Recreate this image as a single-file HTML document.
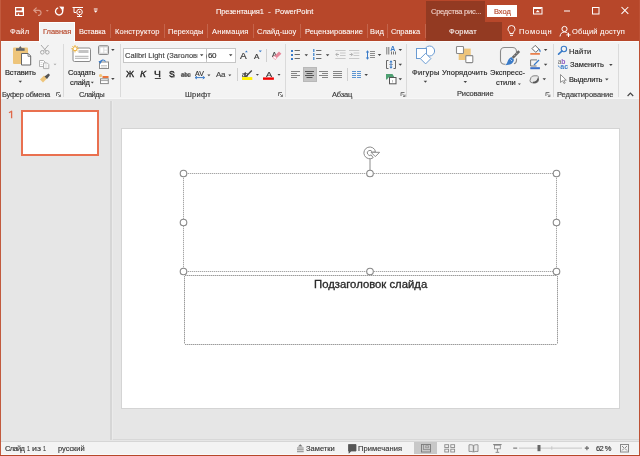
<!DOCTYPE html>
<html><head><meta charset="utf-8"><style>
*{margin:0;padding:0;box-sizing:border-box}
html,body{width:640px;height:456px;overflow:hidden;background:#E6E6E6;font-family:"Liberation Sans",sans-serif}
.a{position:absolute}
.t{position:absolute;white-space:nowrap;transform-origin:0 0}
svg{position:absolute;overflow:visible}
.t{-webkit-text-stroke:0.16px currentColor;will-change:transform}
</style></head><body>

<div class="a" style="left:0;top:0;width:640px;height:41px;background:#B7472A"></div>
<div class="a" style="left:426px;top:1px;width:59px;height:21px;background:#933A22"></div>
<div class="a" style="left:426px;top:22px;width:76px;height:19px;background:#933A22"></div>
<div class="a" style="left:39px;top:22px;width:36px;height:20px;background:#F3F3F3;border-left:1px solid #fff;border-top:1px solid #fff;border-right:1px solid #fff"></div>
<div class="a" style="left:487px;top:5px;width:30px;height:12px;background:#fff"></div>
<div class="a" style="left:0;top:41px;width:640px;height:57px;background:#F3F3F3;border-top:1px solid #FBFBFB"></div>
<div class="a" style="left:39px;top:41px;width:36px;height:2px;background:#F3F3F3;border-left:1px solid #fff;border-right:1px solid #fff"></div>
<div class="a" style="left:0;top:98px;width:640px;height:1px;background:#F7F7F7"></div>
<div class="a" style="left:110px;top:101px;width:2px;height:339px;background:#D6D6D6"></div>
<div class="a" style="left:112px;top:101px;width:1px;height:338px;background:#EBEBEB"></div>
<div class="a" style="left:113px;top:439px;width:526px;height:1px;background:#D8D8D8"></div>
<div class="a" style="left:121px;top:128px;width:499px;height:281px;background:#fff;border:1px solid #D4D4D4"></div>
<div class="a" style="left:21px;top:110px;width:78px;height:46px;background:#fff;border:2px solid #E9704F"></div>
<div class="a" style="left:0;top:441px;width:640px;height:1px;background:#D6D6D6"></div>
<div class="a" style="left:0;top:442px;width:640px;height:14px;background:#F3F3F3"></div>
<div class="a" style="left:414px;top:442px;width:23px;height:13px;background:#C8C8C8"></div>
<div class="a" style="left:303px;top:67px;width:14px;height:15px;background:#C5C5C5;border:1px solid #B8B8B8"></div>
<div class="a" style="left:123px;top:48px;width:84px;height:15px;background:#fff;border:1px solid #C6C6C6"></div>
<div class="a" style="left:206px;top:48px;width:30px;height:15px;background:#fff;border:1px solid #C6C6C6"></div>
<div class="a" style="left:0;top:454px;width:640px;height:1px;background:#FAFAFA"></div>
<div class="a" style="left:0;top:0;width:1px;height:456px;background:#C25A3E"></div>
<div class="a" style="left:639px;top:0;width:1px;height:456px;background:#BD5034"></div>
<div class="a" style="left:0;top:455px;width:640px;height:1px;background:#B7472A"></div>

<div class="t" style="left:215.60px;top:7.90px;font-size:7.5px;line-height:7.5px;color:#fff;letter-spacing:-0.141px;-webkit-text-stroke:0.08px #fff;">Презентация1</div><div class="t" style="left:267.71px;top:7.90px;font-size:7.5px;line-height:7.5px;color:#fff;transform:scaleX(1.1500);-webkit-text-stroke:0.08px #fff;">-</div><div class="t" style="left:274.50px;top:7.90px;font-size:7.5px;line-height:7.5px;color:#fff;letter-spacing:0.000px;-webkit-text-stroke:0.08px #fff;">PowerPoint</div><div class="t" style="left:431.45px;top:8.40px;font-size:7.5px;line-height:7.5px;color:#F2D6CF;letter-spacing:-0.246px;-webkit-text-stroke:0.08px #F2D6CF;">Средства рис...</div><div class="t" style="left:493.50px;top:8.30px;font-size:7.5px;line-height:7.5px;color:#B7472A;letter-spacing:-0.067px;">Вход</div><div class="t" style="left:9.75px;top:28.00px;font-size:7.5px;line-height:7.5px;color:#fff;letter-spacing:0.217px;-webkit-text-stroke:0.05px #fff;">Файл</div><div class="t" style="left:79.20px;top:28.00px;font-size:7.5px;line-height:7.5px;color:#fff;letter-spacing:-0.200px;-webkit-text-stroke:0.05px #fff;">Вставка</div><div class="t" style="left:114.80px;top:28.00px;font-size:7.5px;line-height:7.5px;color:#fff;letter-spacing:0.170px;-webkit-text-stroke:0.05px #fff;">Конструктор</div><div class="t" style="left:168.10px;top:28.00px;font-size:7.5px;line-height:7.5px;color:#fff;letter-spacing:0.021px;-webkit-text-stroke:0.05px #fff;">Переходы</div><div class="t" style="left:211.60px;top:28.00px;font-size:7.5px;line-height:7.5px;color:#fff;letter-spacing:0.164px;-webkit-text-stroke:0.05px #fff;">Анимация</div><div class="t" style="left:256.75px;top:28.00px;font-size:7.5px;line-height:7.5px;color:#fff;letter-spacing:0.031px;-webkit-text-stroke:0.05px #fff;">Слайд-шоу</div><div class="t" style="left:305.00px;top:28.00px;font-size:7.5px;line-height:7.5px;color:#fff;letter-spacing:-0.004px;-webkit-text-stroke:0.05px #fff;">Рецензирование</div><div class="t" style="left:370.00px;top:28.00px;font-size:7.5px;line-height:7.5px;color:#fff;letter-spacing:0.125px;-webkit-text-stroke:0.05px #fff;">Вид</div><div class="t" style="left:391.35px;top:28.00px;font-size:7.5px;line-height:7.5px;color:#fff;letter-spacing:-0.058px;-webkit-text-stroke:0.05px #fff;">Справка</div><div class="t" style="left:449.45px;top:28.00px;font-size:7.5px;line-height:7.5px;color:#fff;letter-spacing:0.210px;-webkit-text-stroke:0.05px #fff;">Формат</div><div class="t" style="left:519.20px;top:28.00px;font-size:7.5px;line-height:7.5px;color:#fff;letter-spacing:0.690px;-webkit-text-stroke:0.05px #fff;">Помощн</div><div class="t" style="left:571.95px;top:28.00px;font-size:7.5px;line-height:7.5px;color:#fff;letter-spacing:0.214px;-webkit-text-stroke:0.05px #fff;">Общий доступ</div><div class="t" style="left:42.50px;top:28.00px;font-size:7.5px;line-height:7.5px;color:#B7472A;letter-spacing:-0.058px;">Главная</div><div class="t" style="left:5.00px;top:68.90px;font-size:7.5px;line-height:7.5px;color:#262626;letter-spacing:-0.143px;">Вставить</div><div class="t" style="left:2.40px;top:90.60px;font-size:7.5px;line-height:7.5px;color:#3A3A3A;letter-spacing:-0.245px;">Буфер обмена</div><div class="t" style="left:67.65px;top:68.90px;font-size:7.5px;line-height:7.5px;color:#262626;letter-spacing:-0.167px;">Создать</div><div class="t" style="left:69.65px;top:78.70px;font-size:7.5px;line-height:7.5px;color:#262626;letter-spacing:-0.250px;">слайд</div><div class="t" style="left:78.75px;top:90.60px;font-size:7.5px;line-height:7.5px;color:#3A3A3A;letter-spacing:-0.450px;">Слайды</div><div class="t" style="left:185.20px;top:90.60px;font-size:7.5px;line-height:7.5px;color:#3A3A3A;letter-spacing:0.237px;">Шрифт</div><div class="t" style="left:331.70px;top:90.60px;font-size:7.5px;line-height:7.5px;color:#3A3A3A;letter-spacing:-0.175px;">Абзац</div><div class="t" style="left:411.75px;top:68.80px;font-size:7.5px;line-height:7.5px;color:#262626;letter-spacing:0.290px;">Фигуры</div><div class="t" style="left:441.85px;top:68.80px;font-size:7.5px;line-height:7.5px;color:#262626;letter-spacing:0.075px;">Упорядочить</div><div class="t" style="left:490.10px;top:68.80px;font-size:7.5px;line-height:7.5px;color:#262626;letter-spacing:0.019px;">Экспресс-</div><div class="t" style="left:496.05px;top:78.90px;font-size:7.5px;line-height:7.5px;color:#262626;letter-spacing:-0.062px;">стили</div><div class="t" style="left:457.10px;top:90.40px;font-size:7.5px;line-height:7.5px;color:#3A3A3A;letter-spacing:-0.150px;">Рисование</div><div class="t" style="left:569.40px;top:47.50px;font-size:7.5px;line-height:7.5px;color:#262626;letter-spacing:0.200px;">Найти</div><div class="t" style="left:569.65px;top:61.40px;font-size:7.5px;line-height:7.5px;color:#262626;letter-spacing:0.021px;">Заменить</div><div class="t" style="left:569.40px;top:76.00px;font-size:7.5px;line-height:7.5px;color:#262626;letter-spacing:-0.186px;">Выделить</div><div class="t" style="left:557.00px;top:90.60px;font-size:7.5px;line-height:7.5px;color:#3A3A3A;letter-spacing:-0.058px;">Редактирование</div><div class="t" style="left:5.15px;top:444.80px;font-size:7.5px;line-height:7.5px;color:#3A3A3A;letter-spacing:-0.688px;">Слайд</div><div class="t" style="left:26.96px;top:444.80px;font-size:7.5px;line-height:7.5px;color:#3A3A3A;transform:scaleX(0.6857);">1</div><div class="t" style="left:32.16px;top:444.80px;font-size:7.5px;line-height:7.5px;color:#3A3A3A;transform:scaleX(1.1786);">из</div><div class="t" style="left:42.76px;top:444.80px;font-size:7.5px;line-height:7.5px;color:#3A3A3A;transform:scaleX(0.6857);">1</div><div class="t" style="left:58.10px;top:444.80px;font-size:7.5px;line-height:7.5px;color:#3A3A3A;letter-spacing:-0.033px;">русский</div><div class="t" style="left:306.45px;top:444.80px;font-size:7.5px;line-height:7.5px;color:#3A3A3A;letter-spacing:0.017px;">Заметки</div><div class="t" style="left:357.50px;top:444.80px;font-size:7.5px;line-height:7.5px;color:#3A3A3A;letter-spacing:0.089px;">Примечания</div><div class="t" style="left:596.05px;top:444.80px;font-size:7.5px;line-height:7.5px;color:#3A3A3A;letter-spacing:-0.583px;">62 %</div><div class="t" style="left:313.55px;top:279.70px;font-size:10px;line-height:10px;color:#2A2A2A;transform:scaleX(1.1307);-webkit-text-stroke:0.3px #2A2A2A;">Подзаголовок слайда</div><div class="t" style="left:125.05px;top:52.10px;font-size:7.5px;line-height:7.5px;color:#444;clip-path:inset(0 0 0 0);">Calibri Light (Заголовки)</div><div class="t" style="left:208.35px;top:52.30px;font-size:8px;line-height:8px;color:#333;letter-spacing:-0.500px;">60</div><div class="t" style="left:126.20px;top:69.80px;font-size:8.5px;line-height:8.5px;color:#222;transform:scaleX(1.0323);-webkit-text-stroke:0.3px #222;">Ж</div><div class="t" style="left:140.10px;top:69.80px;font-size:8.5px;line-height:8.5px;color:#222;transform:scaleX(1.2000);font-style:italic;-webkit-text-stroke:0.3px #222;">К</div><div class="t" style="left:154.19px;top:69.80px;font-size:8.5px;line-height:8.5px;color:#222;transform:scaleX(1.2200);-webkit-text-stroke:0.3px #222;">Ч</div><div class="t" style="left:169.05px;top:70.00px;font-size:8.5px;line-height:8.5px;color:#222;transform:scaleX(0.9905);-webkit-text-stroke:0.3px #222;text-shadow:0.8px 0.8px 0.6px #888;">S</div><div class="t" style="left:180.60px;top:70.80px;font-size:7.5px;line-height:7.5px;color:#333;transform:scaleX(0.7920);-webkit-text-stroke:0.15px #333;">abc</div><div class="t" style="left:194.90px;top:69.80px;font-size:7px;line-height:7px;color:#333;letter-spacing:0.150px;">AV</div><div class="t" style="left:215.50px;top:70.70px;font-size:8px;line-height:8px;color:#444;letter-spacing:-0.350px;">Aa</div><div class="t" style="left:239.50px;top:51.80px;font-size:9px;line-height:9px;color:#333;transform:scaleX(1.1167);">A</div><div class="t" style="left:254.00px;top:52.80px;font-size:7.4px;line-height:7.4px;color:#333;transform:scaleX(1.0800);">A</div><div class="t" style="left:272.00px;top:50.70px;font-size:7px;line-height:7px;color:#333;transform:scaleX(0.9684);">A</div><div class="t" style="left:241.90px;top:71.70px;font-size:6.5px;line-height:6.5px;color:#333;letter-spacing:-1.000px;">ab</div><div class="t" style="left:266.00px;top:70.50px;font-size:8px;line-height:8px;color:#333;transform:scaleX(1.1429);">A</div>
<svg width="640" height="456" style="left:0;top:0"><rect x="15" y="7" width="9" height="9" fill="#fff"/><rect x="16.2" y="8.2" width="5.6" height="2.3" fill="#B7472A"/><rect x="16.2" y="12.2" width="6.6" height="2.8" fill="#B7472A"/><rect x="17.8" y="13.5" width="1.4" height="1.5" fill="#fff"/><path d="M34 10.3H39.2A2.6 2.6 0 0 1 39.2 15.3H38" stroke="#DC9A87" stroke-width="1.2" fill="none"/><path d="M36.6 7.6L33.8 10.3L36.6 13" stroke="#DC9A87" stroke-width="1.2" fill="none"/><path d="M45.8 10.1h3l-1.5 1.6z" fill="#D9947F"/><path d="M58.2 7.9A3.6 3.6 0 1 0 62.2 9.6" stroke="#fff" stroke-width="1.3" fill="none"/><path d="M59.2 6.6L64 6.8L63.2 11.6z" fill="#fff"/><g stroke="#fff" fill="none" stroke-width="1"><path d="M72.5 7.5H83"/><path d="M74 7.5V12.5H76"/><circle cx="79.5" cy="12" r="2.8"/><path d="M79.5 14.8V16.5M77 16.5H82"/></g><path d="M78.8 10.8L81 12L78.8 13.2z" fill="#fff"/><rect x="93.8" y="8.5" width="3.8" height="1" fill="#fff"/><path d="M93.8 10.6H97.6L95.7 12.8z" fill="#fff"/><rect x="533.5" y="7.5" width="8.5" height="6.5" stroke="#fff" fill="none"/><rect x="534" y="8" width="7.5" height="1" fill="#fff"/><path d="M535.7 12.2L537.75 10L539.8 12.2z" fill="#fff"/><rect x="564" y="10.5" width="6" height="1" fill="#fff"/><rect x="592.5" y="7.5" width="6.5" height="6.5" stroke="#fff" fill="none"/><path d="M621.5 7L628.3 13.8M628.3 7L621.5 13.8" stroke="#fff" stroke-width="1.05"/><rect x="110" y="24" width="1" height="14" fill="#C4644B"/><rect x="164" y="24" width="1" height="14" fill="#C4644B"/><rect x="207" y="24" width="1" height="14" fill="#C4644B"/><rect x="253" y="24" width="1" height="14" fill="#C4644B"/><rect x="300" y="24" width="1" height="14" fill="#C4644B"/><rect x="367" y="24" width="1" height="14" fill="#C4644B"/><rect x="387" y="24" width="1" height="14" fill="#C4644B"/><rect x="425" y="24" width="1" height="14" fill="#C4644B"/><path d="M509.8 33.5V32.3C508.6 31.3 508 30.2 508 29A3.5 3.5 0 0 1 515 29C515 30.2 514.4 31.3 513.2 32.3V33.5z" stroke="#fff" fill="none" stroke-width="0.95"/><path d="M510 35.3H513" stroke="#fff"/><circle cx="564.5" cy="29" r="2.6" stroke="#fff" fill="none"/><path d="M560 36.5C560.3 33.5 562 32 564.5 32C566 32 567 32.5 567.6 33.3" stroke="#fff" fill="none"/><path d="M568.5 32.8V37M566.4 34.9H570.6" stroke="#fff"/><rect x="63" y="44" width="1" height="53" fill="#DADADA"/><rect x="120" y="44" width="1" height="53" fill="#DADADA"/><rect x="285" y="44" width="1" height="53" fill="#DADADA"/><rect x="406" y="44" width="1" height="53" fill="#DADADA"/><rect x="553" y="44" width="1" height="53" fill="#DADADA"/><rect x="618" y="44" width="1" height="53" fill="#DADADA"/><rect x="13" y="47.5" width="15" height="16.5" rx="1" fill="#EEC57B"/><path d="M16 48.2H24.6V50.8H16z" fill="#5E6268"/><path d="M18.6 48.6L20.3 46L22 48.6z" fill="#5E6268"/><path d="M21.5 53.5H28.2L30.7 56V65H21.5z" fill="#fff" stroke="#666" stroke-width="1"/><path d="M28 53.5V56.3H30.7" fill="none" stroke="#666" stroke-width="0.8"/><path d="M18.55 80.8h3.5l-1.75 2z" fill="#444"/><g stroke="#A8A8A8" fill="none" stroke-width="1"><circle cx="42.3" cy="52.3" r="1.8"/><circle cx="47.3" cy="52.3" r="1.8"/><path d="M43.5 51L48.5 45M46.1 51L41 45"/></g><g stroke="#A8A8A8" fill="#fff" stroke-width="0.9"><path d="M39.5 60.5H43.5L45 62V66.5H39.5z"/><path d="M43.5 63H47.3L48.8 64.5V68.6H43.5z"/></g><path d="M40.5 62.5h2M40.5 64.5h2M44.5 65h3M44.5 67h3" stroke="#C8C8C8" stroke-width="0.7"/><path d="M53.5 63.7h3l-1.5 1.6z" fill="#A8A8A8"/><path d="M40 79.5L44 75.5L47 78.5L43 82.5z" fill="#EEC57B"/><path d="M44.5 76.5L48.5 73.5L50 75L47 79z" fill="#545454"/><path d="M56.5 96V92.5H60" stroke="#777" fill="none"/><path d="M57.5 93.5L60.5 96.5M60.5 94.5V96.5H58.5" stroke="#777" fill="none" stroke-width="0.9"/><rect x="73" y="48" width="17.5" height="13.5" rx="1.5" fill="#fff" stroke="#8A8A8A" stroke-width="1"/><rect x="78.5" y="50" width="10" height="3" fill="#C4C4C4"/><path d="M75 56.3H88.5M75 58.3H88.5" stroke="#9A9A9A" stroke-width="0.8"/><g stroke="#EEB542" stroke-width="1"><path d="M75 45V52.4M71.3 48.7H78.7M72.4 46.1L77.6 51.3M77.6 46.1L72.4 51.3"/></g><circle cx="75" cy="48.7" r="2" fill="#fff" stroke="#EEB542"/><path d="M90.8 81.8h3l-1.5 1.6z" fill="#444"/><rect x="98.5" y="45.7" width="10" height="8.8" rx="1" fill="#D8D8D8" stroke="#8A8A8A"/><rect x="100.3" y="47.5" width="3" height="5.2" fill="#fff"/><rect x="104.3" y="47.5" width="2.6" height="2.2" fill="#fff"/><rect x="104.3" y="50.5" width="2.6" height="2.2" fill="#fff"/><path d="M111.15 48.9h3.5l-1.75 2z" fill="#444"/><rect x="99.5" y="62" width="9" height="6.5" fill="#fff" stroke="#8A8A8A"/><path d="M101 65.5H107M101 67H107" stroke="#AAA" stroke-width="0.6"/><path d="M100 62.5A3 3 0 0 1 105.5 61.5" stroke="#3A7BC8" stroke-width="1.1" fill="none"/><path d="M98.5 61L100.3 64L102 61.3z" fill="#3A7BC8"/><circle cx="100.6" cy="75.6" r="1.6" fill="#F2C479"/><rect x="102.5" y="76" width="6" height="2" fill="#E8743B"/><rect x="100.5" y="78.8" width="7.8" height="4.8" fill="#fff" stroke="#8A8A8A"/><path d="M101 80.6H108" stroke="#8A8A8A" stroke-width="0.8"/><path d="M111.15 78.1h3.5l-1.75 2z" fill="#444"/><rect x="197.5" y="49" width="8.5" height="13" fill="#fff"/><path d="M199.95 54.2h3.5l-1.75 2z" fill="#444"/><path d="M228.95 54.2h3.5l-1.75 2z" fill="#444"/><path d="M245 52.2L246.4 50.6L247.8 52.2z" fill="#3A7BC8"/><path d="M258.7 50.6H261.9L260.3 52.2z" fill="#3A7BC8"/><rect x="266" y="49" width="1" height="13" fill="#D0D0D0"/><path d="M275.2 59.6L273 57.4L279 51.6L281.4 53.8z" fill="#E8879A"/><path d="M273 57.4L274.6 55.8L276.8 58L275.2 59.6z" fill="#fff" stroke="#E8879A" stroke-width="0.6"/><rect x="154.8" y="78" width="6" height="1" fill="#444"/><rect x="180.8" y="74.6" width="10" height="0.9" fill="#444"/><path d="M195.5 77.6H204.3" stroke="#3A7BC8" stroke-width="1"/><path d="M197 76.2L195 77.6L197 79M202.8 76.2L204.8 77.6L202.8 79" stroke="#3A7BC8" fill="none" stroke-width="0.9"/><path d="M207.4 74.45h3l-1.5 1.7z" fill="#444"/><path d="M228.3 74.45h3l-1.5 1.7z" fill="#444"/><rect x="237" y="68" width="1" height="13" fill="#D0D0D0"/><rect x="242" y="77.1" width="10.3" height="2.9" fill="#FFF200"/><path d="M246 76.5L251.8 70.5" stroke="#444" stroke-width="1.3"/><path d="M255.89999999999998 74.05000000000001h3l-1.5 1.7z" fill="#444"/><rect x="263" y="77.4" width="10.9" height="2.4" fill="#F00000"/><path d="M277.5 74.05000000000001h3l-1.5 1.7z" fill="#444"/><path d="M278.5 96V92.5H282" stroke="#777" fill="none"/><path d="M279.5 93.5L282.5 96.5M282.5 94.5V96.5H280.5" stroke="#777" fill="none" stroke-width="0.9"/><rect x="291" y="50" width="2" height="2" fill="#3A7BC8"/><rect x="294.6" y="50" width="5.3" height="1" fill="#6A6A6A"/><rect x="291" y="54" width="2" height="2" fill="#3A7BC8"/><rect x="294.6" y="54" width="5.3" height="1" fill="#6A6A6A"/><rect x="291" y="58" width="2" height="2" fill="#3A7BC8"/><rect x="294.6" y="58" width="5.3" height="1" fill="#6A6A6A"/><path d="M304.55 54.2h3.5l-1.75 2z" fill="#444"/><rect x="313" y="49" width="1.5" height="3" fill="#5B95D2"/><rect x="316.1" y="50" width="5.3" height="1" fill="#6A6A6A"/><rect x="313" y="53" width="1.5" height="3" fill="#5B95D2"/><rect x="316.1" y="54" width="5.3" height="1" fill="#6A6A6A"/><rect x="313" y="57" width="1.5" height="3" fill="#5B95D2"/><rect x="316.1" y="58" width="5.3" height="1" fill="#6A6A6A"/><path d="M325.85 54.2h3.5l-1.75 2z" fill="#444"/><g fill="#C9C9C9"><rect x="335.3" y="50" width="10.3" height="1"/><rect x="340" y="52.5" width="5.6" height="1"/><rect x="340" y="55" width="5.6" height="1"/><rect x="335.3" y="58" width="10.3" height="1"/></g><path d="M339 54.5H335.8M337.5 52.8L335.8 54.5L337.5 56.2" stroke="#B0B0B0" fill="none"/><g fill="#C9C9C9"><rect x="349" y="50" width="10.3" height="1"/><rect x="353.5" y="52.5" width="5.8" height="1"/><rect x="353.5" y="55" width="5.8" height="1"/><rect x="349" y="58" width="10.3" height="1"/></g><path d="M349.5 54.5H352.7M351 52.8L352.7 54.5L351 56.2" stroke="#B0B0B0" fill="none"/><path d="M367.5 51V59" stroke="#3A7BC8" stroke-width="1"/><path d="M365.8 52.5L367.5 50.2L369.2 52.5zM365.8 57.5L367.5 59.8L369.2 57.5z" fill="#3A7BC8"/><g fill="#8C8C8C"><rect x="370" y="51" width="5" height="1"/><rect x="370" y="53" width="5" height="1"/><rect x="370" y="55" width="5" height="1"/><rect x="370" y="57" width="5" height="1"/></g><path d="M377.75 54.0h3.5l-1.75 2z" fill="#444"/><rect x="291" y="71" width="9" height="1" fill="#858585"/><rect x="291" y="73" width="6" height="1" fill="#858585"/><rect x="291" y="75" width="9" height="1" fill="#858585"/><rect x="291" y="77" width="6" height="1" fill="#858585"/><rect x="305" y="71" width="9" height="1" fill="#555"/><rect x="306.5" y="73" width="6" height="1" fill="#555"/><rect x="305" y="75" width="9" height="1" fill="#555"/><rect x="306.5" y="77" width="6" height="1" fill="#555"/><rect x="319" y="71" width="9" height="1" fill="#858585"/><rect x="322" y="73" width="6" height="1" fill="#858585"/><rect x="319" y="75" width="9" height="1" fill="#858585"/><rect x="322" y="77" width="6" height="1" fill="#858585"/><rect x="333" y="71" width="9" height="1" fill="#858585"/><rect x="333" y="73" width="9" height="1" fill="#858585"/><rect x="333" y="75" width="9" height="1" fill="#858585"/><rect x="333" y="77" width="9" height="1" fill="#858585"/><rect x="347" y="68" width="1" height="13" fill="#D0D0D0"/><rect x="352" y="71" width="4" height="1" fill="#5B95D2"/><rect x="352" y="73" width="4" height="1" fill="#5B95D2"/><rect x="352" y="75" width="4" height="1" fill="#5B95D2"/><rect x="352" y="77" width="4" height="1" fill="#5B95D2"/><rect x="357" y="71" width="4" height="1" fill="#5B95D2"/><rect x="357" y="73" width="4" height="1" fill="#5B95D2"/><rect x="357" y="75" width="4" height="1" fill="#5B95D2"/><rect x="357" y="77" width="4" height="1" fill="#5B95D2"/><path d="M364.45 74.0h3.5l-1.75 2z" fill="#444"/><g fill="#777"><rect x="386.3" y="47" width="1" height="7.5"/><rect x="388.3" y="47" width="1" height="7.5"/><rect x="391" y="51.5" width="1" height="3"/><rect x="393" y="51.5" width="1" height="3"/><rect x="395" y="51.5" width="1" height="3"/></g><text x="390.2" y="51" font-family="Liberation Sans" font-weight="bold" font-size="7" fill="#3A7BC8">A</text><path d="M398.55 49.1h3.5l-1.75 2z" fill="#444"/><path d="M388.5 60.5H386.5V68.5H388.5M393.5 60.5H395.5V68.5H393.5" stroke="#666" fill="none"/><path d="M389 64.5H393" stroke="#888" stroke-width="0.7"/><path d="M391 61V68" stroke="#3A7BC8"/><path d="M389.4 62.3L391 60.2L392.6 62.3zM389.4 66.7L391 68.8L392.6 66.7z" fill="#3A7BC8"/><path d="M398.55 63.8h3.5l-1.75 2z" fill="#444"/><path d="M386 74H392.5L394.5 77.5H388.5L387 79.5H386z" fill="#4EA072"/><rect x="389.5" y="77.5" width="6.5" height="6.3" fill="#fff" stroke="#555"/><path d="M392.5 80V82.5" stroke="#999" stroke-width="0.6"/><path d="M398.55 78.3h3.5l-1.75 2z" fill="#444"/><path d="M401.0 96V92.5H404.5" stroke="#777" fill="none"/><path d="M402.0 93.5L405.0 96.5M405.0 94.5V96.5H403.0" stroke="#777" fill="none" stroke-width="0.9"/><g stroke="#6A9BD2" fill="#fff" stroke-width="1"><circle cx="429.6" cy="51" r="5"/><rect x="416.5" y="48.5" width="10" height="10"/><path d="M425.6 53.3L430.9 58.6L425.6 63.9L420.3 58.6z"/></g><path d="M423.65 80.8h3.5l-1.75 2z" fill="#444"/><rect x="458.7" y="48.6" width="12" height="11.4" fill="#EEC57B"/><rect x="456.5" y="46.5" width="7" height="7" rx="0.8" fill="#fff" stroke="#8A8A8A" stroke-width="1.1"/><rect x="465.8" y="55.6" width="7" height="7" rx="0.8" fill="#fff" stroke="#8A8A8A" stroke-width="1.1"/><path d="M463.55 81.0h3.5l-1.75 2z" fill="#444"/><path d="M504.5 47.5H512.5A4 4 0 0 1 516.5 51.5V52.5M504.5 47.5A4 4 0 0 0 500.5 51.5V60.2A4 4 0 0 0 504.5 64.2H505.5M516.5 58.5V60A4 4 0 0 1 514 63.8" stroke="#8A8A8A" stroke-width="1.1" fill="none"/><path d="M519.2 51.2L512.6 57.8" stroke="#666" stroke-width="2.6"/><path d="M517 53.8L516 52.8M515 55.8L514 54.8" stroke="#CFCFCF" stroke-width="0.8"/><path d="M511.3 57L514 59.7Q513.5 63 510 64.5L505.5 65.2Q507.5 62.5 508 60.5Q509 58 511.3 57z" fill="#3A7BC8"/><path d="M510.5 59.5L511.8 60.8" stroke="#fff" stroke-width="0.8"/><path d="M517.9 83.4h3l-1.5 1.6z" fill="#444"/><path d="M532 48.6L535.2 45.4L539 49.2L535.8 52.4z" fill="#fff" stroke="#555" stroke-width="0.9"/><path d="M539 49.2C540 50 540.3 51 540 52" stroke="#3A7BC8" stroke-width="1.2" fill="none"/><rect x="530.3" y="53.1" width="9.6" height="1.6" fill="#E8743B"/><path d="M543.85 49.1h3.5l-1.75 2z" fill="#444"/><path d="M537 59.9H530.6V66H536.6" stroke="#777" fill="none"/><path d="M539 60L534 65" stroke="#3A7BC8" stroke-width="1.3"/><rect x="530.3" y="67.2" width="9.6" height="2" fill="#3A6FC8"/><path d="M543.85 63.8h3.5l-1.75 2z" fill="#444"/><path d="M531 77.5Q532 75.8 534 75.8H537.5Q538.5 76.3 538.4 78V80.5Q538 82.6 536 82.8H532Q530 82.6 530 80.5z" fill="#E8E8E8" stroke="#777" stroke-width="0.9"/><path d="M533 82.6Q537.5 82.6 538.2 78.5" stroke="#555" stroke-width="1.5" fill="none"/><path d="M542.55 78.3h3.5l-1.75 2z" fill="#444"/><path d="M545.9 96V92.5H549.4" stroke="#777" fill="none"/><path d="M546.9 93.5L549.9 96.5M549.9 94.5V96.5H547.9" stroke="#777" fill="none" stroke-width="0.9"/><circle cx="563.9" cy="49" r="2.7" stroke="#3A7BC8" stroke-width="1.1" fill="none"/><path d="M562 51L558.6 54.2" stroke="#3A7BC8" stroke-width="1.7" stroke-linecap="round"/><text x="557.7" y="64.2" font-family="Liberation Sans" font-size="6.5" fill="#666">a</text><text x="561.2" y="64.2" font-family="Liberation Sans" font-weight="bold" font-size="6.8" fill="#8E5CC4">b</text><text x="560.3" y="68.9" font-family="Liberation Sans" font-weight="bold" font-size="7" fill="#3A7BC8">ac</text><path d="M557.9 65.6L559.7 67.2" stroke="#3A7BC8" stroke-width="1"/><path d="M609.15 64.1h3.5l-1.75 2z" fill="#444"/><path d="M560.5 74.5V82.5L562.5 80.7L564 83.5L565.2 83L563.8 80.2H566.3z" fill="#fff" stroke="#888" stroke-width="0.9"/><path d="M605.05 78.4h3.5l-1.75 2z" fill="#444"/><path d="M627.6 96L630.4 93.2L633.2 96" stroke="#444" fill="none" stroke-width="1.2"/><path d="M9 112.8L11.6 111.2V118.2" stroke="#E0694A" stroke-width="1.3" fill="none" stroke-linejoin="round"/><path d="M300.3 444.3L298 446.5H302.6z" fill="#777"/><g fill="#888"><rect x="297" y="447.5" width="6.7" height="1"/><rect x="297" y="449.3" width="6.7" height="1"/><rect x="297" y="451.2" width="6.7" height="1"/></g><path d="M348.5 444.5H356V451H351L349 453.2V451H348.5z" fill="#555" stroke="#555" stroke-width="0.8" stroke-linejoin="round"/><rect x="421.5" y="444.5" width="9" height="7.5" fill="none" stroke="#7A7A7A" stroke-width="0.9"/><path d="M423.5 445V450M423.5 449.5H430" stroke="#8A8A8A" stroke-width="0.8"/><rect x="425.8" y="445.8" width="2.6" height="2" fill="none" stroke="#8A8A8A" stroke-width="0.7"/><g fill="none" stroke="#8A8A8A" stroke-width="0.9"><rect x="444.8" y="444.7" width="3.8" height="2.8"/><rect x="450.8" y="444.7" width="3.8" height="2.8"/><rect x="444.8" y="449.2" width="3.8" height="2.8"/><rect x="450.8" y="449.2" width="3.8" height="2.8"/></g><path d="M469 444.8Q471 444.3 473.3 445.3V452Q471 451 469 451.5zM473.7 445.3Q476 444.3 478 444.8V451.5Q476 451 473.7 452z" fill="#EAEAEA" stroke="#8A8A8A" stroke-width="0.9"/><path d="M493.2 444.6H501.6" stroke="#7A7A7A" stroke-width="1"/><rect x="494.5" y="445.2" width="5.8" height="3.6" fill="none" stroke="#8A8A8A" stroke-width="0.8"/><path d="M497.4 448.8V451.8M495.6 452.3H499.2" stroke="#7A7A7A" stroke-width="0.9"/><rect x="513.2" y="447.6" width="4" height="1" fill="#666"/><rect x="519" y="447.6" width="63" height="1" fill="#C6C6C6"/><rect x="537.5" y="445" width="3" height="6.2" fill="#666"/><rect x="551.3" y="446.3" width="1" height="3.4" fill="#C6C6C6"/><path d="M584.8 448.1H589M586.9 446V450.2" stroke="#666" stroke-width="1.1"/><rect x="620.5" y="444.5" width="8" height="7.5" fill="none" stroke="#8A8A8A"/><path d="M622 446L624 448M627 446L625 448M622 450.5L624 448.5M627 450.5L625 448.5" stroke="#8A8A8A"/><path d="M184 173.5L556 173.5" stroke="#E4E4E4" stroke-width="1" fill="none"/><path d="M184 173.5L556 173.5" stroke="#A6A6A6" stroke-width="1" stroke-dasharray="1 1" fill="none"/><path d="M184 271.5L556 271.5" stroke="#E4E4E4" stroke-width="1" fill="none"/><path d="M184 271.5L556 271.5" stroke="#A6A6A6" stroke-width="1" stroke-dasharray="1 1" fill="none"/><path d="M183.5 174L183.5 271" stroke="#E4E4E4" stroke-width="1" fill="none"/><path d="M183.5 174L183.5 271" stroke="#A6A6A6" stroke-width="1" stroke-dasharray="1 1" fill="none"/><path d="M556.5 174L556.5 271" stroke="#E4E4E4" stroke-width="1" fill="none"/><path d="M556.5 174L556.5 271" stroke="#A6A6A6" stroke-width="1" stroke-dasharray="1 1" fill="none"/><path d="M185 275.5L557 275.5" stroke="#D2D2D2" stroke-width="1" fill="none"/><path d="M185 275.5L557 275.5" stroke="#9C9C9C" stroke-width="1" stroke-dasharray="1 1" fill="none"/><path d="M185 344.5L557 344.5" stroke="#D2D2D2" stroke-width="1" fill="none"/><path d="M185 344.5L557 344.5" stroke="#9C9C9C" stroke-width="1" stroke-dasharray="1 1" fill="none"/><path d="M184.5 276L184.5 344" stroke="#D2D2D2" stroke-width="1" fill="none"/><path d="M184.5 276L184.5 344" stroke="#9C9C9C" stroke-width="1" stroke-dasharray="1 1" fill="none"/><path d="M557.5 276L557.5 344" stroke="#D2D2D2" stroke-width="1" fill="none"/><path d="M557.5 276L557.5 344" stroke="#9C9C9C" stroke-width="1" stroke-dasharray="1 1" fill="none"/><path d="M370 159V170" stroke="#8C8C8C" stroke-width="1"/><circle cx="183.5" cy="173.5" r="3.3" fill="#fff" stroke="#888888" stroke-width="1.1"/><circle cx="370" cy="173.5" r="3.3" fill="#fff" stroke="#888888" stroke-width="1.1"/><circle cx="556.5" cy="173.5" r="3.3" fill="#fff" stroke="#888888" stroke-width="1.1"/><circle cx="183.5" cy="222.5" r="3.3" fill="#fff" stroke="#888888" stroke-width="1.1"/><circle cx="556.5" cy="222.5" r="3.3" fill="#fff" stroke="#888888" stroke-width="1.1"/><circle cx="183.5" cy="271.5" r="3.3" fill="#fff" stroke="#888888" stroke-width="1.1"/><circle cx="370" cy="271.5" r="3.3" fill="#fff" stroke="#888888" stroke-width="1.1"/><circle cx="556.5" cy="271.5" r="3.3" fill="#fff" stroke="#888888" stroke-width="1.1"/><path d="M375.57 151.67A5.9 5.9 0 1 0 373.18 157.73L371.23 154.95A2.5 2.5 0 1 1 372.25 152.38z" fill="#fff" stroke="#8A8A8A" stroke-width="1"/><path d="M371 152.3L379.6 152.3L375.3 156.6z" fill="#fff" stroke="#8A8A8A" stroke-width="1"/></svg>
</body></html>
